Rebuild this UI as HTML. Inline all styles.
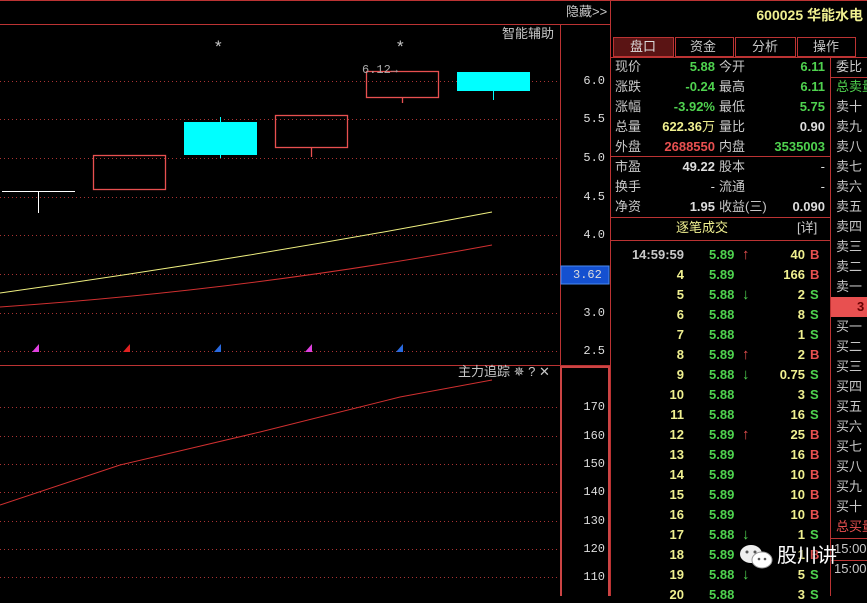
<!DOCTYPE html>
<html><head><meta charset="utf-8"><style>
body{margin:0;background:#000;width:867px;height:596px;overflow:hidden;position:relative;font-family:"Liberation Sans","Noto Sans CJK SC",sans-serif;font-size:13px}
.a{position:absolute;white-space:nowrap;line-height:16px}
.w{color:#ddd}.g{color:#4fd24f}.y{color:#f0f090}.r{color:#e85050}.lb{color:#c8c8c8}
.m{font-family:"Liberation Mono","Noto Sans CJK SC",monospace}
b{font-weight:bold}
</style></head><body>
<svg width="867" height="596" style="position:absolute;left:0;top:0">
<g stroke="#a33" stroke-width="1" stroke-dasharray="1,3">
<line x1="0" y1="81.5" x2="558" y2="81.5"/><line x1="0" y1="119.5" x2="558" y2="119.5"/><line x1="0" y1="158.5" x2="558" y2="158.5"/><line x1="0" y1="197.5" x2="558" y2="197.5"/><line x1="0" y1="235.5" x2="558" y2="235.5"/><line x1="0" y1="274.5" x2="558" y2="274.5"/><line x1="0" y1="313.5" x2="558" y2="313.5"/><line x1="0" y1="351.5" x2="558" y2="351.5"/>
<line x1="0" y1="407.5" x2="558" y2="407.5"/><line x1="0" y1="436.5" x2="558" y2="436.5"/><line x1="0" y1="464.5" x2="558" y2="464.5"/><line x1="0" y1="492.5" x2="558" y2="492.5"/><line x1="0" y1="521.5" x2="558" y2="521.5"/><line x1="0" y1="549.5" x2="558" y2="549.5"/><line x1="0" y1="577.5" x2="558" y2="577.5"/>
</g>
<g stroke="#b33" stroke-width="1" fill="none">
<line x1="0" y1="0.5" x2="867" y2="0.5"/>
<line x1="0" y1="24.5" x2="610" y2="24.5"/>
<line x1="560.5" y1="24" x2="560.5" y2="365"/>
<line x1="0" y1="365.5" x2="610" y2="365.5"/>
<line x1="610.5" y1="0" x2="610.5" y2="596"/>
</g>
<rect x="561" y="367" width="48" height="232" fill="none" stroke="#c44" stroke-width="2"/>
<g stroke="#fff"><line x1="2" y1="191.5" x2="75" y2="191.5"/><line x1="38.5" y1="191" x2="38.5" y2="213"/></g>
<g stroke="#e85050" stroke-width="1.3" fill="none">
<rect x="93.5" y="155.5" width="72" height="34"/>
<rect x="275.5" y="115.5" width="72" height="32"/>
<line x1="311.5" y1="148" x2="311.5" y2="157"/>
<rect x="366.5" y="71.5" width="72" height="26"/>
<line x1="402.5" y1="98" x2="402.5" y2="103"/>
</g>
<line x1="220.5" y1="117" x2="220.5" y2="158" stroke="#0ff"/>
<rect x="184" y="122" width="73" height="33" fill="#0ff"/>
<line x1="493.5" y1="90" x2="493.5" y2="100" stroke="#0ff"/>
<rect x="457" y="72" width="73" height="19" fill="#0ff"/>
<path d="M0 293 Q250 258 492 212" stroke="#f0f080" fill="none"/>
<path d="M0 307 Q250 290 492 245" stroke="#d03030" fill="none"/>
<path d="M0 505 L120 465 L260 432 L400 397 L492 380" stroke="#d03030" fill="none"/>
<path d="M32 352 L39 344 L39 352Z" fill="#e040e0"/>
<path d="M123 352 L130 344 L130 352Z" fill="#e02020"/>
<path d="M214 352 L221 344 L221 352Z" fill="#2a6ae0"/>
<path d="M305 352 L312 344 L312 352Z" fill="#e040e0"/>
<path d="M396 352 L403 344 L403 352Z" fill="#2a6ae0"/>
<rect x="561" y="266" width="48" height="18" fill="#1450d0" stroke="#4a8af0"/>
<g stroke="#b33" fill="none">
<line x1="611" y1="156.5" x2="831" y2="156.5"/>
<line x1="611" y1="217.5" x2="831" y2="217.5"/>
<line x1="611" y1="240.5" x2="831" y2="240.5"/>
<line x1="830.5" y1="57" x2="830.5" y2="596"/>
<line x1="611" y1="57.5" x2="867" y2="57.5"/>
<line x1="831" y1="77.5" x2="867" y2="77.5"/>
<line x1="831" y1="538.5" x2="867" y2="538.5"/>
<line x1="831" y1="560.5" x2="867" y2="560.5"/>
</g>
<rect x="831" y="297" width="36" height="20" fill="#e85050"/>
<g stroke="#b33" fill="none">
<rect x="613.5" y="37.5" width="60" height="19" fill="#5a1414"/>
<rect x="675.5" y="37.5" width="58" height="19"/>
<rect x="735.5" y="37.5" width="60" height="19"/>
<rect x="797.5" y="37.5" width="58" height="19"/>
</g>
</svg>
<div class="a lb" style="left:566px;top:4px">隐藏&gt;&gt;</div>
<div class="a lb" style="left:502px;top:26px">智能辅助</div>
<div class="a lb" style="left:215px;top:39px;font-size:17px">*</div>
<div class="a lb" style="left:397px;top:39px;font-size:17px">*</div>
<div class="a m" style="left:362px;top:62px;font-size:12px;color:#aaa">6.12→</div>
<div class="a w m" style="right:262px;top:73px;font-size:12px">6.0</div>
<div class="a w m" style="right:262px;top:111px;font-size:12px">5.5</div>
<div class="a w m" style="right:262px;top:150px;font-size:12px">5.0</div>
<div class="a w m" style="right:262px;top:189px;font-size:12px">4.5</div>
<div class="a w m" style="right:262px;top:227px;font-size:12px">4.0</div>
<div class="a w m" style="left:573px;top:267px;font-size:12px">3.62</div>
<div class="a w m" style="right:262px;top:305px;font-size:12px">3.0</div>
<div class="a w m" style="right:262px;top:343px;font-size:12px">2.5</div>
<div class="a lb" style="left:458px;top:364px">主力追踪 ✵ ? ✕</div>
<div class="a w m" style="right:262px;top:399px;font-size:12px">170</div>
<div class="a w m" style="right:262px;top:428px;font-size:12px">160</div>
<div class="a w m" style="right:262px;top:456px;font-size:12px">150</div>
<div class="a w m" style="right:262px;top:484px;font-size:12px">140</div>
<div class="a w m" style="right:262px;top:513px;font-size:12px">130</div>
<div class="a w m" style="right:262px;top:541px;font-size:12px">120</div>
<div class="a w m" style="right:262px;top:569px;font-size:12px">110</div>
<div class="a y" style="right:4px;top:7px;font-size:14px"><b>600025 华能水电</b></div>
<div class="a w" style="left:630px;top:39px">盘口</div>
<div class="a lb" style="left:690px;top:39px">资金</div>
<div class="a lb" style="left:752px;top:39px">分析</div>
<div class="a lb" style="left:813px;top:39px">操作</div>
<div id="info"></div>
<script>
var h='';
function t(x,y,c,s,al){h+='<div class="a '+c+'" style="'+(al?'right:'+(867-x):'left:'+x)+'px;top:'+(y-8)+'px">'+s+'</div>';}
var rows=[["现价","<b>5.88</b>","g","今开","<b>6.11</b>","g"],["涨跌","<b>-0.24</b>","g","最高","<b>6.11</b>","g"],["涨幅","<b>-3.92%</b>","g","最低","<b>5.75</b>","g"],["总量","<b>622.36</b>万","y","量比","<b>0.90</b>","w"],["外盘","<b>2688550</b>","r","内盘","<b>3535003</b>","g"],["市盈","<b>49.22</b>","w","股本","-","w"],["换手","-","w","流通","-","w"],["净资","<b>1.95</b>","w","收益(三)","<b>0.090</b>","w"]];
var ys=[67,87,107,127,147,167,187,207];
rows.forEach(function(r,i){t(615,ys[i],"lb",r[0]);t(715,ys[i],r[2],r[1],1);t(719,ys[i],"lb",r[3]);t(825,ys[i],r[5],r[4],1);});
t(676,228,"y","逐笔成交");t(797,228,"lb","[详]");
var tr=[["14:59:59","5.89","↑","40","B"],["4","5.89","","166","B"],["5","5.88","↓","2","S"],["6","5.88","","8","S"],["7","5.88","","1","S"],["8","5.89","↑","2","B"],["9","5.88","↓","0.75","S"],["10","5.88","","3","S"],["11","5.88","","16","S"],["12","5.89","↑","25","B"],["13","5.89","","16","B"],["14","5.89","","10","B"],["15","5.89","","10","B"],["16","5.89","","10","B"],["17","5.88","↓","1","S"],["18","5.89","","1","B"],["19","5.88","↓","5","S"],["20","5.88","","3","S"]];
tr.forEach(function(r,i){var y=255+i*20;t(684,y,i==0?"lb":"y","<b>"+r[0]+"</b>",1);t(709,y,"g","<b>"+r[1]+"</b>");if(r[2])t(742,y,r[2]=="↑"?"r":"g","<b style='font-size:15px'>"+r[2]+"</b>");t(805,y,"y","<b>"+r[3]+"</b>",1);t(810,y,r[4]=="B"?"r":"g","<b>"+r[4]+"</b>");});
var L=["委比","总卖量","卖十","卖九","卖八","卖七","卖六","卖五","卖四","卖三","卖二","卖一"];
L.forEach(function(s,i){t(836,67+i*20,i==1?"g":"lb",s);});
t(857,307,"r","<b style='color:#600'>3</b>");
var B=["买一","买二","买三","买四","买五","买六","买七","买八","买九","买十","总买量"];
B.forEach(function(s,i){t(836,327+i*20,i==10?"r":"lb",s);});
t(834,549,"lb","15:00");t(834,569,"lb","15:00");
document.getElementById('info').innerHTML=h;
</script>
<svg width="40" height="30" style="position:absolute;left:737px;top:542px"><ellipse cx="14" cy="12" rx="11" ry="9" fill="#eee"/><ellipse cx="25" cy="18" rx="10" ry="8" fill="#fff" stroke="#999"/><circle cx="10" cy="10" r="1.5" fill="#555"/><circle cx="18" cy="10" r="1.5" fill="#555"/><circle cx="22" cy="17" r="1.3" fill="#555"/><circle cx="28" cy="17" r="1.3" fill="#555"/></svg>
<div class="a" style="left:777px;top:544px;font-size:20px;line-height:24px;color:#fff;text-shadow:0 0 2px #000">股川讲</div>
</body></html>
